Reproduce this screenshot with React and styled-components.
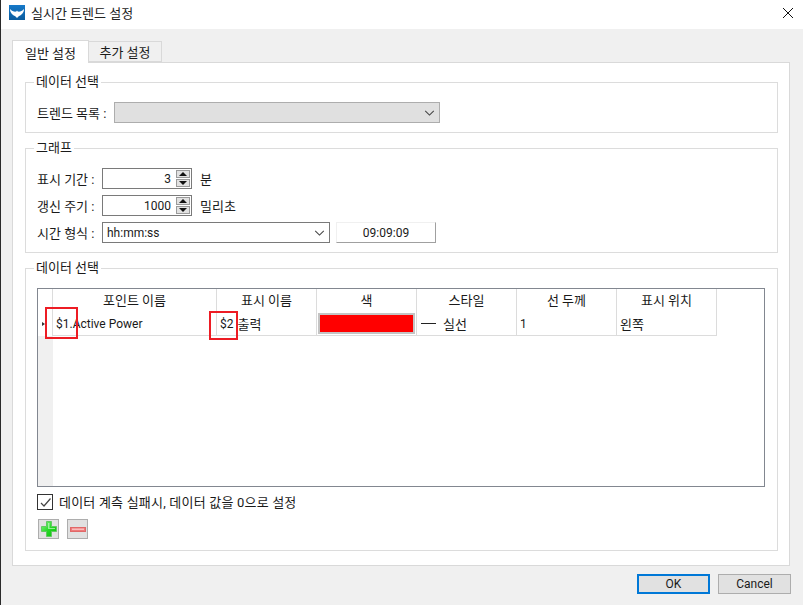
import styled, { createGlobalStyle } from 'styled-components';

const GlobalStyle = createGlobalStyle`
  html, body {
    margin: 0;
    padding: 0;
    background: #f0f0f0;
  }
  body {
    font-family: Roboto, "Noto Sans CJK KR", sans-serif;
    font-size: 13px;
    color: #1a1a1a;
  }
`;

const columns = [
  { title: "포인트 이름", width: 164 },
  { title: "표시 이름", width: 100 },
  { title: "색", width: 100 },
  { title: "스타일", width: 100 },
  { title: "선 두께", width: 100 },
  { title: "표시 위치", width: 100 },
];

const App = () => {
  return <Window>
    <GlobalStyle />
    <TitleBar>
      <Logo viewBox="0 0 16 15">
        <defs>
          <linearGradient id="logoBg" x1="0" y1="0" x2="0" y2="1">
            <stop offset="0" stopColor="#1679c9" />
            <stop offset="1" stopColor="#0b5c9e" />
          </linearGradient>
        </defs>
        <rect width="16" height="15" fill="url(#logoBg)" />
        <path d="M1 4 C3 6 5 7 7.3 6.6 L8 5.6 L8.7 6.6 C11 7 13 6 15 4 C15 8 12 10.5 10 11 L8 13 L6 11 C4 10.5 1 8 1 4 Z" fill="#fff" />
      </Logo>
      <Title>실시간 트렌드 설정</Title>
      <CloseIcon viewBox="0 0 12 12">
        <path d="M1 1 L11 11 M11 1 L1 11" stroke="#111" strokeWidth="1" fill="none" />
      </CloseIcon>
    </TitleBar>

    <Body>
      <Tabs>
        <Tab selected>일반 설정</Tab>
        <Tab>추가 설정</Tab>
      </Tabs>
      <Panel>
        <Group height={51}>
          <Legend>데이터 선택</Legend>
          <Row>
            <Label>트렌드 목록 :</Label>
            <DisabledSelect>
              <Chevron viewBox="0 0 12 7"><path d="M1 1 L6 6 L11 1" /></Chevron>
            </DisabledSelect>
          </Row>
        </Group>

        <Group height={105}>
          <Legend>그래프</Legend>
          <Rows>
            <Row>
              <FieldLabel>표시 기간 :</FieldLabel>
              <Spin>
                <SpinValue>3</SpinValue>
                <SpinButtons>
                  <SpinButton><UpArrow /></SpinButton>
                  <SpinButton><DownArrow /></SpinButton>
                </SpinButtons>
              </Spin>
              <Unit>분</Unit>
            </Row>
            <Row>
              <FieldLabel>갱신 주기 :</FieldLabel>
              <Spin>
                <SpinValue>1000</SpinValue>
                <SpinButtons>
                  <SpinButton><UpArrow /></SpinButton>
                  <SpinButton><DownArrow /></SpinButton>
                </SpinButtons>
              </Spin>
              <Unit>밀리초</Unit>
            </Row>
            <Row>
              <FieldLabel>시간 형식 :</FieldLabel>
              <Combo>
                hh:mm:ss
                <Chevron viewBox="0 0 12 7"><path d="M1 1 L6 6 L11 1" /></Chevron>
              </Combo>
              <Preview>09:09:09</Preview>
            </Row>
          </Rows>
        </Group>

        <Group height={283}>
          <Legend>데이터 선택</Legend>
          <Table>
            <RowHeader>
              <Corner />
              <RowMark><Marker /></RowMark>
              <RowHeaderRest />
            </RowHeader>
            <TableColumns>
              <HeaderRow>
                {columns.map((col) => <HeaderCell key={col.title} width={col.width}>{col.title}</HeaderCell>)}
              </HeaderRow>
              <DataRow>
                <Cell width={164}>
                  <LatinText>$1.Active Power</LatinText>
                  <Callout left={-8} top={-5} width={33} height={32} />
                </Cell>
                <Cell width={100}>
                  <LatinText>$2</LatinText>
                  <DisplayName>출력</DisplayName>
                  <Callout left={-8} top={-1} width={29} height={29} />
                </Cell>
                <Cell width={100}><Swatch /></Cell>
                <Cell width={100}><LineSample />실선</Cell>
                <Cell width={100}><LatinText>1</LatinText></Cell>
                <Cell width={100}>왼쪽</Cell>
              </DataRow>
            </TableColumns>
          </Table>
          <CheckRow>
            <CheckBox>
              <svg width="13" height="13" viewBox="0 0 13 13">
                <path d="M2 7 L5 10 L11.5 2.5" stroke="#444" strokeWidth="1.2" fill="none" />
              </svg>
            </CheckBox>
            <CheckLabel>데이터 계측 실패시, 데이터 값을 0으로 설정</CheckLabel>
          </CheckRow>
          <IconButtons>
            <IconButton>
              <svg width="16" height="16" viewBox="0 0 16 16">
                <defs>
                  <linearGradient id="plusFill" x1="0" y1="0" x2="1" y2="1">
                    <stop offset="0" stopColor="#8cf58c" />
                    <stop offset="0.5" stopColor="#26d826" />
                    <stop offset="1" stopColor="#0cba0c" />
                  </linearGradient>
                </defs>
                <path d="M5.5 0.5 H10.5 V5.5 H15.5 V10.5 H10.5 V15.5 H5.5 V10.5 H0.5 V5.5 H5.5 Z" fill="url(#plusFill)" stroke="#62c862" strokeWidth="1" />
                <path d="M7 2 H8.5 V7 H14 V8 H7 Z" fill="#c4fac4" opacity="0.7" />
              </svg>
            </IconButton>
            <IconButton>
              <svg width="16" height="5" viewBox="0 0 16 5">
                <rect x="0.5" y="0.5" width="15" height="4" fill="#ee7a7a" stroke="#e06868" strokeWidth="1" />
                <rect x="2" y="1.5" width="12" height="1.5" fill="#f9bcbc" />
              </svg>
            </IconButton>
          </IconButtons>
        </Group>
      </Panel>
      <Footer>
        <OkButton>OK</OkButton>
        <CancelButton>Cancel</CancelButton>
      </Footer>
    </Body>
  </Window>;
};

const Window = styled.div`
  width: 803px;
  height: 605px;
  overflow: hidden;
  box-sizing: border-box;
  display: flex;
  flex-direction: column;
  background: #f0f0f0;
  border-left: 1px solid #2a2a2a;
`;

const TitleBar = styled.div`
  box-sizing: border-box;
  height: 29px;
  flex: none;
  display: flex;
  align-items: center;
  padding: 0 9px 4px 8px;
  background: #fff;
`;

const Logo = styled.svg`
  width: 16px;
  height: 15px;
  flex: none;
`;

const Title = styled.div`
  flex: 1;
  margin-left: 6px;
  color: #222;
`;

const CloseIcon = styled.svg`
  width: 12px;
  height: 12px;
`;

const Body = styled.div`
  flex: 1;
  display: flex;
  flex-direction: column;
  padding: 11px 13px 0 11px;
`;

const Tabs = styled.div`
  display: flex;
  align-items: flex-end;
  height: 22px;
  flex: none;
`;

const Tab = styled.div`
  box-sizing: border-box;
  display: flex;
  align-items: center;
  justify-content: center;
  width: ${props => props.selected ? "77px" : "73px"};
  height: ${props => props.selected ? "23px" : "21px"};
  margin-bottom: ${props => props.selected ? "-1px" : "0"};
  position: relative;
  z-index: ${props => props.selected ? 1 : 0};
  background: ${props => props.selected ? "#fff" : "#f0f0f0"};
  border: 1px solid #d9d9d9;
  border-bottom: ${props => props.selected ? "none" : "1px solid #d9d9d9"};
  border-left: ${props => props.selected ? "1px solid #d9d9d9" : "none"};
`;

const Panel = styled.div`
  box-sizing: border-box;
  height: 504px;
  flex: none;
  display: flex;
  flex-direction: column;
  gap: 15px;
  padding: 19px 11px 0 12px;
  background: #fff;
  border: 1px solid #d9d9d9;
`;

const Group = styled.div`
  box-sizing: border-box;
  position: relative;
  height: ${props => props.height}px;
  flex: none;
  padding: 19px 11px 0 11px;
  border: 1px solid #dcdcdc;
`;

const Legend = styled.div`
  position: absolute;
  left: 8px;
  top: -9px;
  padding: 0 2px;
  background: #fff;
  line-height: 16px;
`;

const Rows = styled.div`
  display: flex;
  flex-direction: column;
  gap: 6px;
`;

const Row = styled.div`
  display: flex;
  align-items: center;
  height: 21px;
`;

const Label = styled.div`
  width: 77px;
  flex: none;
  white-space: nowrap;
`;

const FieldLabel = styled.div`
  width: 65px;
  flex: none;
  white-space: nowrap;
`;

const DisabledSelect = styled.div`
  box-sizing: border-box;
  width: 326px;
  height: 21px;
  display: flex;
  align-items: center;
  padding-right: 3px;
  background: #e0e0e0;
  border: 1px solid #adadad;
`;

const Chevron = styled.svg`
  width: 11px;
  height: 6px;
  margin-left: auto;
  margin-right: 1px;
  fill: none;
  stroke: #444;
  stroke-width: 1.2;
`;

const Spin = styled.div`
  box-sizing: border-box;
  width: 90px;
  height: 21px;
  display: flex;
  align-items: center;
  background: #fff;
  border: 1px solid #7a7a7a;
`;

const SpinValue = styled.div`
  flex: 1;
  text-align: right;
  padding-right: 5px;
  font-size: 12px;
`;

const SpinButtons = styled.div`
  width: 14px;
  height: 17px;
  margin-right: 1px;
  display: flex;
  flex-direction: column;
  gap: 1px;
`;

const SpinButton = styled.div`
  flex: 1;
  display: flex;
  align-items: center;
  justify-content: center;
  background: #e1e1e1;
  border: 1px solid #9a9a9a;
`;

const UpArrow = styled.div`
  width: 0;
  height: 0;
  border-left: 4px solid transparent;
  border-right: 4px solid transparent;
  border-bottom: 4px solid #111;
`;

const DownArrow = styled.div`
  width: 0;
  height: 0;
  border-left: 4px solid transparent;
  border-right: 4px solid transparent;
  border-top: 4px solid #111;
`;

const Unit = styled.div`
  margin-left: 8px;
`;

const Combo = styled.div`
  box-sizing: border-box;
  width: 228px;
  height: 21px;
  display: flex;
  align-items: center;
  padding: 0 3px 0 4px;
  font-size: 12px;
  background: #fff;
  border: 1px solid #7a7a7a;
`;

const Preview = styled.div`
  box-sizing: border-box;
  width: 100px;
  height: 21px;
  margin-left: 6px;
  display: flex;
  align-items: center;
  justify-content: center;
  font-size: 12px;
  border-right: 1px solid #a0a0a0;
  border-bottom: 1px solid #a0a0a0;
  border-top: 1px solid #f0f0f0;
  border-left: 1px solid #f0f0f0;
`;

const Table = styled.div`
  box-sizing: border-box;
  width: 728px;
  height: 199px;
  display: flex;
  background: #fff;
  border: 1px solid #828790;
`;

const RowHeader = styled.div`
  width: 15px;
  flex: none;
  display: flex;
  flex-direction: column;
`;

const Corner = styled.div`
  height: 23px;
  border-right: 1px solid #dcdcdc;
`;

const RowMark = styled.div`
  height: 24px;
  box-sizing: border-box;
  display: flex;
  align-items: center;
  padding-left: 4px;
  border-right: 1px solid #dcdcdc;
`;

const Marker = styled.div`
  width: 0;
  height: 0;
  border-top: 2px solid transparent;
  border-bottom: 2px solid transparent;
  border-left: 3px solid #333;
`;

const RowHeaderRest = styled.div`
  flex: 1;
  background: #f0f0f0;
`;

const TableColumns = styled.div`
  display: flex;
  flex-direction: column;
`;

const HeaderRow = styled.div`
  display: flex;
  height: 23px;
`;

const HeaderCell = styled.div`
  box-sizing: border-box;
  width: ${props => props.width}px;
  display: flex;
  align-items: center;
  justify-content: center;
  padding-bottom: 2px;
  border-right: 1px solid #dcdcdc;
`;

const DataRow = styled.div`
  box-sizing: border-box;
  display: flex;
  height: 24px;
  border-bottom: 1px solid #dcdcdc;
`;

const Cell = styled.div`
  box-sizing: border-box;
  position: relative;
  width: ${props => props.width}px;
  display: flex;
  align-items: center;
  padding: 0 3px;
  border-right: 1px solid #dcdcdc;
`;

const LatinText = styled.span`
  font-size: 12px;
  white-space: nowrap;
`;

const DisplayName = styled.span`
  margin-left: 4px;
`;

const Callout = styled.div`
  position: absolute;
  left: ${props => props.left}px;
  top: ${props => props.top}px;
  width: ${props => props.width}px;
  height: ${props => props.height}px;
  box-sizing: border-box;
  border: 2px solid #ed1c24;
`;

const Swatch = styled.div`
  box-sizing: border-box;
  flex: none;
  width: 97px;
  height: 21px;
  margin-left: -2px;
  background: #f00;
  border: 2px solid #c4c4c4;
`;

const LineSample = styled.div`
  flex: none;
  width: 15px;
  height: 1px;
  margin: 0 7px 0 1px;
  background: #222;
`;

const CheckRow = styled.div`
  display: flex;
  align-items: center;
  gap: 6px;
  margin-top: 7px;
  height: 16px;
`;

const CheckBox = styled.div`
  box-sizing: border-box;
  flex: none;
  width: 16px;
  height: 16px;
  display: flex;
  align-items: center;
  justify-content: center;
  background: #fff;
  border: 1px solid #333;
`;

const CheckLabel = styled.span`
  padding-bottom: 2px;
  letter-spacing: 0.2px;
`;

const IconButtons = styled.div`
  display: flex;
  gap: 8px;
  margin-top: 9px;
  margin-left: 1px;
`;

const IconButton = styled.div`
  box-sizing: border-box;
  width: 21px;
  height: 20px;
  display: flex;
  align-items: center;
  justify-content: center;
  background: #e1e1e1;
  border: 1px solid #adadad;
`;

const Footer = styled.div`
  display: flex;
  justify-content: flex-end;
  gap: 8px;
  margin: 8px -1px 0 0;
`;

const OkButton = styled.div`
  box-sizing: border-box;
  width: 73px;
  height: 20px;
  display: flex;
  align-items: center;
  justify-content: center;
  font-size: 12px;
  background: #e1e1e1;
  border: 2px solid #0078d7;
`;

const CancelButton = styled.div`
  box-sizing: border-box;
  width: 73px;
  height: 20px;
  display: flex;
  align-items: center;
  justify-content: center;
  font-size: 12px;
  background: #e1e1e1;
  border: 1px solid #adadad;
`;

export default App;
